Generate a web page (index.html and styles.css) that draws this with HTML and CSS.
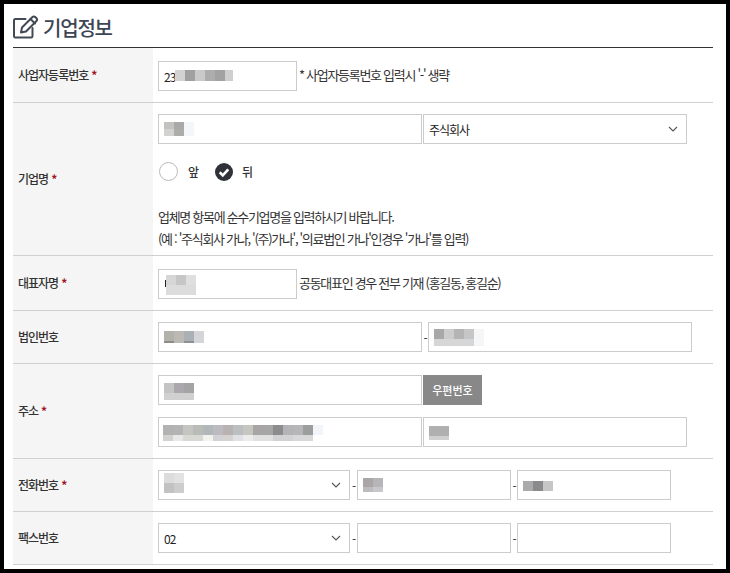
FILE: index.html
```html
<!DOCTYPE html>
<html lang="ko">
<head>
<meta charset="utf-8">
<title>기업정보</title>
<link rel="stylesheet" href="styles.css">
</head>
<body>
<main class="frame">
  <header class="head">
    <svg class="head-icon" width="26" height="24" viewBox="0 0 26 24" fill="none" stroke="#414a56" stroke-width="2" stroke-linejoin="round" stroke-linecap="round">
      <path d="M12.5 4H2.2A1.2 1.2 0 0 0 1 5.2V21.3a1.2 1.2 0 0 0 1.2 1.2H18.3a1.2 1.2 0 0 0 1.2-1.2V13"/>
      <path d="M8 17.5l1-5L19.5 2a1.9 1.9 0 0 1 2.7 0l1.3 1.3a1.9 1.9 0 0 1 0 2.7L13 16.5z"/>
      <path d="M17.5 4l4.5 4.5"/>
    </svg>
    <h1 class="title">기업정보</h1>
  </header>

  <section class="row row-tall">
    <div class="label">사업자등록번호 <b class="req">*</b></div>
    <div class="cell">
      <div class="line">
        <div class="field w139">23<svg class="mosaic" width="60" height="28"><rect y="8" width="10" height="11" fill="#d2d2d2"/><rect x="10" y="8" width="10" height="11" fill="#a0a0a0"/><rect x="20" y="8" width="10" height="11" fill="#cacaca"/><rect x="30" y="8" width="10" height="11" fill="#adadad"/><rect x="40" y="8" width="10" height="11" fill="#a2a2a2"/><rect x="50" y="8" width="8" height="11" fill="#cfcfcf"/></svg></div>
        <span class="side">* 사업자등록번호 입력시 '-' 생략</span>
      </div>
    </div>
  </section>

  <section class="row row-name">
    <div class="label">기업명 <b class="req">*</b></div>
    <div class="cell">
      <div class="line gap1">
        <div class="field w264"><svg class="mosaic" width="30" height="28"><rect y="7" width="10" height="7" fill="#c2c2c0"/><rect x="10" y="7" width="10" height="7" fill="#a9a9a7"/><rect y="14" width="10" height="7" fill="#d2d2d0"/><rect x="10" y="14" width="10" height="7" fill="#acacaa"/><rect x="20" y="7" width="10" height="14" fill="#f4f7f9"/></svg></div>
        <div class="field w264">주식회사<svg class="chev" width="10" height="6" viewBox="0 0 10 6" fill="none" stroke="#555" stroke-width="1.1"><path d="M1 1l4 4 4-4"/></svg></div>
      </div>
      <div class="radios">
        <span class="radio"></span><span class="radio-text">앞</span>
        <svg class="radio-on" width="18" height="18" viewBox="0 0 19 19"><circle cx="9.5" cy="9.5" r="9.5" fill="#2f3238"/><path d="M5 9.8l3.2 3.2L14 6.8" fill="none" stroke="#fff" stroke-width="2.8"/></svg><span class="radio-text on">뒤</span>
      </div>
      <p class="note">업체명 항목에 순수기업명을 입력하시기 바랍니다.<br>(예 : '주식회사 가나, '(주)가나', '의료법인 가나'인경우 '가나'를 입력)</p>
    </div>
  </section>

  <section class="row row-tall">
    <div class="label">대표자명 <b class="req">*</b></div>
    <div class="cell">
      <div class="line">
        <div class="field w139"><svg class="mosaic" width="33" height="28"><rect x="1" y="10" width="1" height="7" fill="#222"/><rect x="2" y="5" width="10" height="10" fill="#d6d6d6"/><rect x="12" y="5" width="10" height="10" fill="#c6c6c6"/><rect x="22" y="5" width="10" height="10" fill="#dfdfdf"/><rect x="2" y="15" width="30" height="10" fill="#dcdcdc"/></svg></div>
        <span class="side">공동대표인 경우 전부 기재 (홍길동, 홍길순)</span>
      </div>
    </div>
  </section>

  <section class="row">
    <div class="label">법인번호</div>
    <div class="cell">
      <div class="line">
        <div class="field w264"><svg class="mosaic" width="40" height="28"><rect y="8" width="10" height="12" fill="#b2b2aa"/><rect x="10" y="8" width="10" height="12" fill="#bcb8b4"/><rect x="20" y="8" width="10" height="12" fill="#a9b1b5"/><rect x="30" y="8" width="10" height="12" fill="#d5d5d9"/><rect y="18" width="10" height="2" fill="#8c8c88"/><rect x="20" y="18" width="10" height="2" fill="#8e9294"/></svg></div>
        <span class="dash">-</span>
        <div class="field w264"><svg class="mosaic" width="50" height="28"><rect x="0" y="6" width="10" height="10" fill="#a8a8a8"/><rect x="10" y="6" width="10" height="10" fill="#cccccc"/><rect x="20" y="6" width="10" height="10" fill="#b4b4b4"/><rect x="30" y="6" width="10" height="10" fill="#c6c6c6"/><rect y="16" width="40" height="7" fill="#d6d6d6"/><rect x="40" y="6" width="10" height="17" fill="#f5f6f7"/></svg></div>
      </div>
    </div>
  </section>

  <section class="row">
    <div class="label">주소 <b class="req">*</b></div>
    <div class="cell stack">
      <div class="line gap1">
        <div class="field w264"><svg class="mosaic" width="30" height="28"><rect y="7" width="10" height="10" fill="#c4c4c4"/><rect x="10" y="7" width="10" height="10" fill="#aaa8ac"/><rect x="20" y="7" width="10" height="10" fill="#a4a4a6"/><rect y="17" width="30" height="7" fill="#d0d0d0"/></svg></div>
        <button class="btn" type="button">우편번호</button>
      </div>
      <div class="line gap1">
        <div class="field w264"><svg class="mosaic" width="160" height="28"><rect x="-1" y="7" width="10" height="10" fill="#b2b2b2"/><rect x="9" y="7" width="10" height="10" fill="#b4b4b4"/><rect x="19" y="7" width="10" height="10" fill="#c4c4c0"/><rect x="29" y="7" width="10" height="10" fill="#babcb8"/><rect x="39" y="7" width="10" height="10" fill="#b2b8ba"/><rect x="49" y="7" width="10" height="10" fill="#bcbcc0"/><rect x="59" y="7" width="10" height="10" fill="#b8b2b2"/><rect x="69" y="7" width="10" height="10" fill="#bcbfc2"/><rect x="79" y="7" width="10" height="10" fill="#c6c6c0"/><rect x="89" y="7" width="10" height="10" fill="#a8a4a4"/><rect x="99" y="7" width="10" height="10" fill="#a6a6a6"/><rect x="109" y="7" width="10" height="10" fill="#8c8c8e"/><rect x="119" y="7" width="10" height="10" fill="#b4b4b8"/><rect x="129" y="7" width="10" height="10" fill="#b6b6b8"/><rect x="139" y="7" width="10" height="10" fill="#9c9e9e"/><rect x="149" y="7" width="10" height="10" fill="#f1f4f8"/><rect x="-1" y="17" width="10" height="6" fill="#d2d2d0"/><rect x="9" y="17" width="10" height="6" fill="#e8e8e8"/><rect x="19" y="17" width="20" height="6" fill="#d8d8d4"/><rect x="39" y="17" width="10" height="6" fill="#f2f2ee"/><rect x="49" y="17" width="10" height="6" fill="#d2d2d6"/><rect x="59" y="17" width="10" height="6" fill="#d6d2d0"/><rect x="69" y="17" width="10" height="6" fill="#e0e0e6"/><rect x="79" y="17" width="10" height="6" fill="#ececec"/><rect x="89" y="17" width="20" height="6" fill="#e0e0e0"/><rect x="109" y="17" width="20" height="6" fill="#d2d2d4"/><rect x="129" y="17" width="20" height="6" fill="#d8d8d8"/></svg></div>
        <div class="field w264"><svg class="mosaic" width="20" height="28"><rect width="20" y="8" height="10" fill="#b0b0b0"/><rect y="18" width="20" height="4" fill="#d0d0d0"/></svg></div>
      </div>
    </div>
  </section>

  <section class="row">
    <div class="label">전화번호 <b class="req">*</b></div>
    <div class="cell">
      <div class="line">
        <div class="field w192"><svg class="mosaic" width="20" height="28"><rect y="2" width="10" height="10" fill="#dcdcdc"/><rect x="10" y="2" width="10" height="10" fill="#e2e2e2"/><rect y="12" width="10" height="10" fill="#c2c2c2"/><rect x="10" y="12" width="10" height="10" fill="#cdcdcd"/></svg><svg class="chev" width="10" height="6" viewBox="0 0 10 6" fill="none" stroke="#555" stroke-width="1.1"><path d="M1 1l4 4 4-4"/></svg></div>
        <span class="dash wide">-</span>
        <div class="field w154"><svg class="mosaic" width="20" height="28"><rect y="7" width="10" height="9" fill="#aaa6a6"/><rect x="10" y="7" width="10" height="9" fill="#b6b6b8"/><rect y="16" width="10" height="5" fill="#bcbcbc"/><rect x="10" y="16" width="10" height="5" fill="#c8c8cc"/></svg></div>
        <span class="dash">-</span>
        <div class="field w154"><svg class="mosaic" width="30" height="28"><rect y="10" width="10" height="10" fill="#aaaaaa"/><rect x="10" y="10" width="10" height="10" fill="#8a8a8c"/><rect x="20" y="10" width="10" height="10" fill="#c6c6c6"/></svg></div>
      </div>
    </div>
  </section>

  <section class="row">
    <div class="label">팩스번호</div>
    <div class="cell">
      <div class="line">
        <div class="field w192">02<svg class="chev" width="10" height="6" viewBox="0 0 10 6" fill="none" stroke="#555" stroke-width="1.1"><path d="M1 1l4 4 4-4"/></svg></div>
        <span class="dash wide">-</span>
        <div class="field w154"></div>
        <span class="dash">-</span>
        <div class="field w154"></div>
      </div>
    </div>
  </section>
</main>
</body>
</html>
```

FILE: styles.css
```css
* { box-sizing: border-box; }
html, body { margin: 0; height: 100%; }
body {
  background: #000;
  padding: 4px;
  font-family: "Noto Sans CJK KR", "Noto Sans", sans-serif;
  font-size: 12px;
  color: #333;
  letter-spacing: -1px;
  overflow: hidden;
}
.frame {
  background: #fff;
  height: 565px;
  padding: 0 13px 0 9px;
}
.head {
  height: 44px;
  padding-top: 3px;
  display: flex;
  align-items: center;
  gap: 4px;
  border-bottom: 1px solid #333;
}
.head-icon { flex: none; margin-top: -1px; }
.title {
  margin: 0;
  font-size: 20px;
  font-weight: 500;
  color: #3d4654;
  letter-spacing: -1.2px;
}
.row {
  display: grid;
  grid-template-columns: 140px 1fr;
  border-bottom: 1px solid #d0d0d0;
}
.label {
  background: #f5f5f5;
  padding: 0 0 2px 5px;
  display: flex;
  align-items: center;
  gap: 3px;
  font-weight: 500;
  color: #333;
}
.req { color: #a01525; font-weight: 700; }
.cell {
  padding: 11px 0 11px 5px;
  min-width: 0;
}
.row-tall .cell { padding-top: 13px; }
.row-name .cell { padding-bottom: 5px; }
.stack { display: flex; flex-direction: column; gap: 12px; }
.line { display: flex; align-items: center; }
.gap1 { gap: 1px; }
.field {
  flex: none;
  height: 30px;
  border: 1px solid #ccc;
  padding: 0 8px 0 5px;
  display: flex;
  align-items: center;
  background: #fff;
  color: #222;
}
.w139 { width: 139px; }
.w154 { width: 154px; }
.w192 { width: 192px; }
.w264 { width: 264px; }
.mosaic { display: block; flex: none; overflow: visible; }
.chev { margin-left: auto; flex: none; }
.side {
  margin: 0 0 3px 2px;
  font-size: 13px;
  letter-spacing: -1.3px;
  color: #333;
}
.dash { flex: none; width: 6px; text-align: center; color: #333; }
.wide { width: 7px; }
.btn {
  flex: none;
  width: 59px;
  height: 30px;
  border: 0;
  padding: 0;
  background: #888;
  color: #fff;
  font: 500 11px "Noto Sans CJK KR", "Noto Sans", sans-serif;
  letter-spacing: 0;
}
.radios {
  display: flex;
  align-items: center;
  margin-top: 18px;
  margin-left: 1px;
  height: 19px;
}
.radio {
  flex: none;
  width: 19px;
  height: 19px;
  border: 1px solid #bbb;
  border-radius: 50%;
  background: #fff;
}
.radio-on { flex: none; margin-left: 17px; }
.radio-text { margin-left: 10px; width: 10px; font-weight: 500; }
.radio-text.on { margin-left: 9px; }
.note {
  margin: 25px 0 0;
  font-size: 13px;
  letter-spacing: -1.3px;
  line-height: 22px;
  color: #333;
}
```
